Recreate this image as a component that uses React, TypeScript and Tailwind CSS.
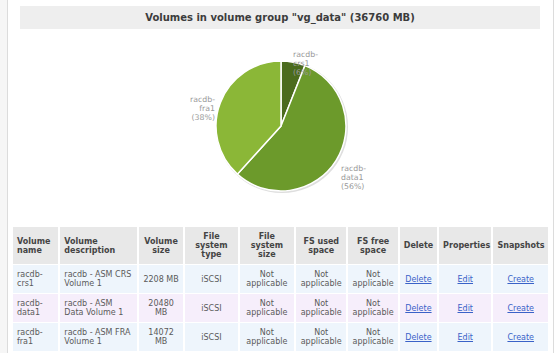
const volumes = [
  { name: 'racdb-crs1', desc: 'racdb - ASM CRS Volume 1', size: '2208 MB', bg: 'bg-[#eef5fc]' },
  { name: 'racdb-data1', desc: 'racdb - ASM Data Volume 1', size: '20480 MB', bg: 'bg-[#f6eefb]' },
  { name: 'racdb-fra1', desc: 'racdb - ASM FRA Volume 1', size: '14072 MB', bg: 'bg-[#eef5fc]' },
];

const headers = [
  { label: 'Volume name', left: true },
  { label: 'Volume description', left: true },
  { label: 'Volume size' },
  { label: 'File system type' },
  { label: 'File system size' },
  { label: 'FS used space' },
  { label: 'FS free space' },
  { label: 'Delete' },
  { label: 'Properties' },
  { label: 'Snapshots' },
];

const widths = [45, 76, 44, 52, 54, 50, 49, 37, 52, 54];

function Pie() {
  return (
    <svg width="150" height="150" viewBox="0 0 150 150" className="absolute left-[198px] top-[22px]">
      <circle cx="76" cy="76" r="66" fill="#dedede" />
      <path d="M75 75 L75 10 A65 65 0 0 1 98.95 14.58 Z" fill="#4b6b1d" stroke="#fff" strokeWidth="1.5" />
      <path d="M75 75 L98.95 14.58 A65 65 0 1 1 31.35 123.17 Z" fill="#6c9a2b" stroke="#fff" strokeWidth="1.5" />
      <path d="M75 75 L31.35 123.17 A65 65 0 0 1 75 10 Z" fill="#8bb737" stroke="#fff" strokeWidth="1.5" />
    </svg>
  );
}

export default function App() {
  return (
    <div className="min-h-[353px] bg-[#f6f6f6] pl-[7px] font-['DejaVu_Sans',sans-serif]">
      <div className="w-[547px] min-h-[353px] bg-white border-x border-[#dcdcdc]">
        <div className="pt-[6px] pl-[12px]">
          <div className="w-[520px] h-[23px] bg-[#eeeeee] flex items-center justify-center text-[10px] font-bold text-[#3c3c3c]">
            Volumes in volume group "vg_data" (36760 MB)
          </div>
        </div>

        {/* chart */}
        <div className="relative h-[197px] text-[7.8px] leading-[9px] text-[#999]">
          <Pie />
          <div className="absolute left-[285px] top-[21px]">
            racdb-<br />crs1<br />(6%)
          </div>
          <div className="absolute right-[338px] top-[66px] text-right">
            racdb-<br />fra1<br />(38%)
          </div>
          <div className="absolute left-[333px] top-[135px]">
            racdb-<br />data1<br />(56%)
          </div>
        </div>

        <table className="ml-[3px] w-[539px] table-fixed border-separate [border-spacing:2px_1px] text-[8px] leading-[9px]">
          <colgroup>
            {widths.map((w, i) => (
              <col key={i} style={{ width: w }} />
            ))}
          </colgroup>
          <thead>
            <tr>
              {headers.map((h) => (
                <th
                  key={h.label}
                  className={`h-[37px] bg-[#e8e8e8] px-[4px] font-bold text-[#444] align-middle ${h.left ? 'text-left' : 'text-center'}`}
                >
                  {h.label}
                </th>
              ))}
            </tr>
          </thead>
          <tbody>
            {volumes.map((v) => (
              <tr key={v.name} className="text-[#5a5a5a]">
                <td className={`${v.bg} h-[28px] px-[4px]`}>{v.name}</td>
                <td className={`${v.bg} px-[4px]`}>{v.desc}</td>
                <td className={`${v.bg} px-[3px] text-center`}>{v.size}</td>
                <td className={`${v.bg} text-center`}>iSCSI</td>
                <td className={`${v.bg} text-center`}>Not applicable</td>
                <td className={`${v.bg} text-center`}>Not applicable</td>
                <td className={`${v.bg} text-center`}>Not applicable</td>
                <td className={`${v.bg} text-center`}>
                  <a href="#" className="text-[#3a62c8] underline">Delete</a>
                </td>
                <td className={`${v.bg} text-center`}>
                  <a href="#" className="text-[#3a62c8] underline">Edit</a>
                </td>
                <td className={`${v.bg} text-center`}>
                  <a href="#" className="text-[#3a62c8] underline">Create</a>
                </td>
              </tr>
            ))}
          </tbody>
        </table>
      </div>
    </div>
  );
}
